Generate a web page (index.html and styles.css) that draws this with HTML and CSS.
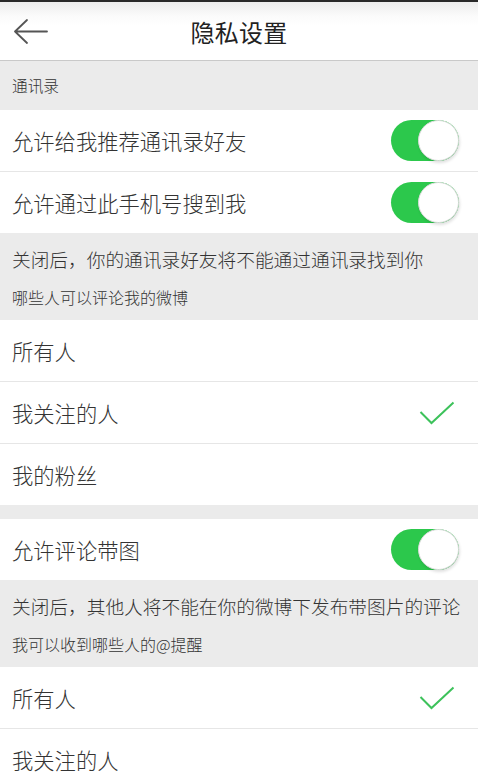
FILE: index.html
```html
<!DOCTYPE html>
<html lang="zh">
<head>
<meta charset="utf-8">
<title>隐私设置</title>
<link rel="stylesheet" href="styles.css">
</head>
<body>
<header class="topbar">
  <svg class="back" width="34" height="26" viewBox="0 0 34 26">
    <path d="M1 12.5 H33 M13 1 L1 12.5 L13 24" fill="none" stroke="#555" stroke-width="1.8" stroke-linecap="round" stroke-linejoin="round"/>
  </svg>
  <h1 class="title">隐私设置</h1>
</header>

<div class="section-label">通讯录</div>
<div class="group">
  <div class="row"><span>允许给我推荐通讯录好友</span><span class="toggle"><span class="knob"></span></span></div>
  <div class="row"><span>允许通过此手机号搜到我</span><span class="toggle"><span class="knob"></span></span></div>
</div>
<div class="note">
  <p class="note-text">关闭后，你的通讯录好友将不能通过通讯录找到你</p>
  <p class="note-label">哪些人可以评论我的微博</p>
</div>
<div class="group">
  <div class="row"><span>所有人</span></div>
  <div class="row"><span>我关注的人</span>
    <svg class="check" width="36" height="24" viewBox="0 0 36 24"><path d="M1.5 11 L12.5 22 L34.5 1.5" fill="none" stroke="#3dc25b" stroke-width="2"/></svg>
  </div>
  <div class="row"><span>我的粉丝</span></div>
</div>
<div class="gap"></div>
<div class="group">
  <div class="row"><span>允许评论带图</span><span class="toggle"><span class="knob"></span></span></div>
</div>
<div class="note">
  <p class="note-text">关闭后，其他人将不能在你的微博下发布带图片的评论</p>
  <p class="note-label">我可以收到哪些人的@提醒</p>
</div>
<div class="group">
  <div class="row"><span>所有人</span>
    <svg class="check" width="36" height="24" viewBox="0 0 36 24"><path d="M1.5 11 L12.5 22 L34.5 1.5" fill="none" stroke="#3dc25b" stroke-width="2"/></svg>
  </div>
  <div class="row"><span>我关注的人</span></div>
</div>
</body>
</html>
```
FILE: styles.css
```css
html, body {
  margin: 0;
  padding: 0;
  background: #ebebeb;
  font-family: "Noto Sans CJK SC", "Noto Sans", sans-serif;
  font-weight: 300;
  color: #333;
}
.topbar {
  height: 58px;
  border-top: 2px solid #2a2a2a;
  border-bottom: 1px solid #c9c9c9;
  background: linear-gradient(#ededed 0px, #fbfbfb 14px, #ffffff 24px);
  display: flex;
  align-items: center;
  justify-content: center;
  position: relative;
}
.back {
  position: absolute;
  left: 14px;
  top: 17px;
}
.title {
  margin: 0;
  font-size: 24px;
  font-weight: 400;
  color: #222;
  letter-spacing: 0.3px;
}
.section-label {
  height: 49px;
  display: flex;
  align-items: center;
  padding-left: 12px;
  font-size: 15.7px;
  color: #333;
}
.group {
  background: #fff;
}
.row {
  height: 61px;
  border-bottom: 1px solid #e6e6e6;
  display: flex;
  align-items: center;
  justify-content: space-between;
  padding: 0 19px 0 12px;
  font-size: 21.3px;
  color: #333;
}
.row:last-child {
  border-bottom: none;
}
.toggle {
  width: 68px;
  height: 41px;
  border-radius: 21px;
  background: #2cc84c;
  display: flex;
  justify-content: flex-end;
}
.knob {
  width: 41px;
  height: 41px;
  box-sizing: border-box;
  border-radius: 50%;
  background: #fff;
  border: 1px solid #dcdcdc;
  box-shadow: 1px 2px 3px rgba(0, 0, 0, 0.12);
}
.check {
  margin-right: 4px;
}
.note {
  padding: 12px 12px 11px;
}
.note-text {
  margin: 0;
  line-height: 28px;
  font-size: 18.7px;
  color: #333;
  white-space: nowrap;
}
.note-label {
  margin: 12px 0 0;
  line-height: 24px;
  font-size: 16px;
  color: #333;
}
.gap {
  height: 14px;
}
```
